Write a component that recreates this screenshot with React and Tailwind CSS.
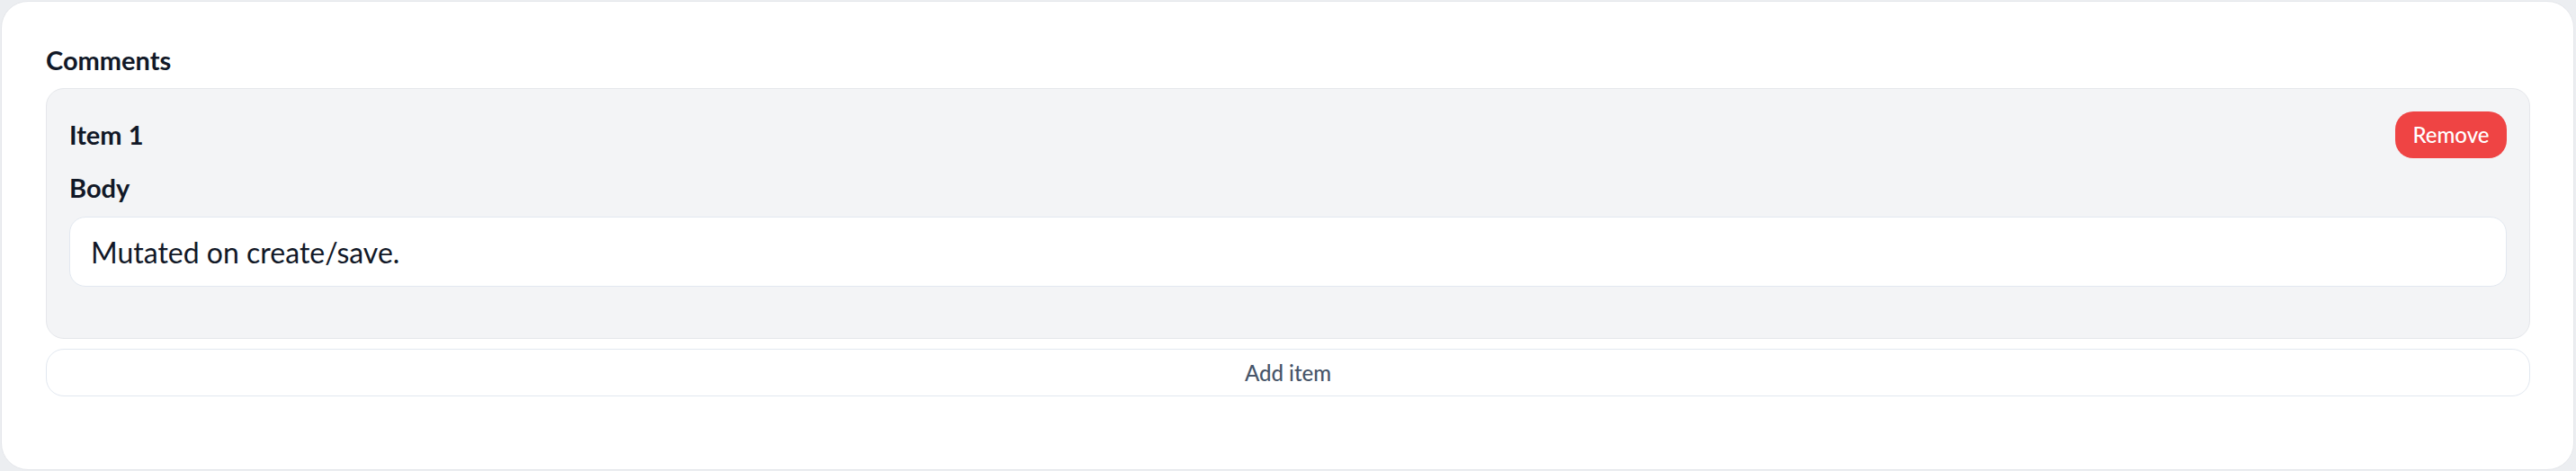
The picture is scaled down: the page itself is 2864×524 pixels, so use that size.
import { useState } from 'react'

export default function App() {
  const [items, setItems] = useState([{ id: 1, body: 'Mutated on create/save.' }])

  function addItem() {
    setItems([...items, { id: items.length + 1, body: '' }])
  }

  function removeItem(id) {
    setItems(items.filter((i) => i.id !== id))
  }

  return (
    <div className="h-[524px] bg-[#eceef1] pt-px pl-px pr-[2px] pb-px font-['Lato','Open_Sans',sans-serif]">
      <div className="h-full rounded-[30px] border border-[#e5e7eb] bg-white pt-[45px] pl-[49px] pr-[48px]">
        <h2 className="text-[29px] leading-[40px] font-bold text-[#111827] mb-[11px]">Comments</h2>

        {/* Items */}
        <div className="flex flex-col gap-[11px]">
          {items.map((item, idx) => (
            <div
              key={item.id}
              className="rounded-[20px] border border-[#e5e7eb] bg-[#f3f4f6] pt-[25px] pl-[25px] pr-[25px] pb-[57px]"
            >
              <div className="flex items-center justify-between">
                <span className="text-[29px] leading-[40px] font-bold text-[#111827]">
                  Item {idx + 1}
                </span>
                <button
                  onClick={() => removeItem(item.id)}
                  className="h-[52px] w-[124px] rounded-[20px] bg-[#ef4444] text-[24px] font-medium text-white"
                >
                  Remove
                </button>
              </div>
              <label className="block mt-[13px] text-[29px] leading-[40px] font-bold text-[#111827]">
                Body
              </label>
              <input
                type="text"
                defaultValue={item.body}
                className="mt-[12px] block w-full h-[78px] rounded-[18px] border border-[#e2e8f0] bg-white pl-[23px] text-[32px] text-[#111827] outline-none"
              />
            </div>
          ))}

          <button
            onClick={addItem}
            className="h-[53px] w-full rounded-[20px] border border-[#e2e8f0] bg-white text-[24px] font-medium text-[#475569]"
          >
            Add item
          </button>
        </div>
      </div>
    </div>
  )
}
